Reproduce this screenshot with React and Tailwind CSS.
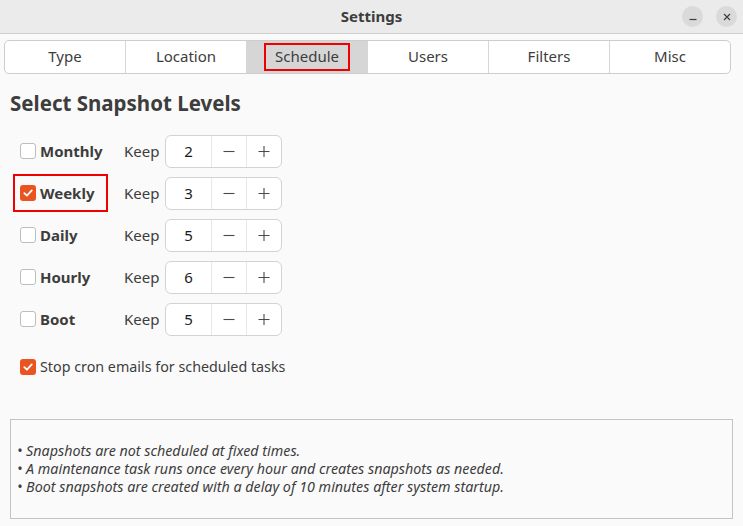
import React from "react";

const FONT = { fontFamily: '"Noto Sans", "Open Sans", sans-serif' };

function Check({ checked }) {
  if (checked) {
    return (
      <span className="flex h-[16px] w-[16px] items-center justify-center rounded-[3px] bg-[#e95420]">
        <svg width="12" height="12" viewBox="0 0 12 12">
          <path d="M2.3 6.2 L4.9 8.6 L9.8 3.4" fill="none" stroke="#fff" strokeWidth="1.8" strokeLinecap="round" strokeLinejoin="round" />
        </svg>
      </span>
    );
  }
  return <span className="block h-[16px] w-[16px] rounded-[3px] border border-[#bdbdbd] bg-white" />;
}

function Spin({ value }) {
  return (
    <div className="flex h-[33px] w-[117px] rounded-[6px] border border-[#d3d3d3] bg-white">
      <div className="flex w-[46px] items-center justify-center border-r border-[#e8e8e8] text-[15px] text-[#1a1a1a]">{value}</div>
      <div className="flex w-[35px] items-center justify-center border-r border-[#e8e8e8]">
        <svg width="14" height="14" viewBox="0 0 14 14"><path d="M1.5 7.5 H12.5" stroke="#4a4a4a" strokeWidth="1.1" /></svg>
      </div>
      <div className="flex flex-1 items-center justify-center">
        <svg width="14" height="14" viewBox="0 0 14 14"><path d="M1.5 7.5 H12.5 M7 2 V13" stroke="#4a4a4a" strokeWidth="1.1" /></svg>
      </div>
    </div>
  );
}

function Row({ label, value, checked, highlight }) {
  return (
    <div className="flex h-[42px] items-center">
      <div className="flex w-[124px] items-center pl-[20px]">
        {highlight ? (
          <div className="-ml-[7px] flex h-[38px] w-[95px] items-center border-2 border-[#f00000] pl-[5px]">
            <Check checked={checked} />
            <span className="ml-[4px] text-[15px] font-bold text-[#3d3d3d]">{label}</span>
          </div>
        ) : (
          <>
            <Check checked={checked} />
            <span className="ml-[4px] text-[15px] font-bold text-[#3d3d3d]">{label}</span>
          </>
        )}
      </div>
      <span className="w-[41px] text-[15px] text-[#3d3d3d]">Keep</span>
      <Spin value={value} />
    </div>
  );
}

export default function App() {
  const tabs = ["Type", "Location", "Schedule", "Users", "Filters", "Misc"];
  return (
    <div className="flex h-[526px] w-[743px] flex-col overflow-hidden bg-[#fafafa] text-[#3d3d3d]" style={FONT}>
      <div className="grid h-[34px] grid-cols-[1fr_auto_1fr] items-center border-b border-[#cfcfcf] bg-[#ebebeb]">
        <div />
        <div className="text-[15px] font-bold text-[#3d3d3d]">Settings</div>
        <div className="flex justify-end gap-[13px] pr-[6px]">
          <div className="flex h-[21px] w-[21px] items-center justify-center rounded-full bg-[#dadada]">
            <svg width="10" height="10" viewBox="0 0 10 10"><path d="M1.5 7.5 H8.5" stroke="#3d3d3d" strokeWidth="1.2" /></svg>
          </div>
          <div className="flex h-[21px] w-[21px] items-center justify-center rounded-full bg-[#dadada]">
            <svg width="10" height="10" viewBox="0 0 10 10"><path d="M2 2 L8 8 M8 2 L2 8" stroke="#3d3d3d" strokeWidth="1.2" /></svg>
          </div>
        </div>
      </div>

      <div className="mx-[4px] mt-[6px] flex h-[34px] w-[727px] overflow-hidden rounded-[5px] border border-[#cdcdcd] bg-white">
        {tabs.map((t, i) => (
          <div
            key={t}
            className={
              "flex flex-1 items-center justify-center pb-[1px] text-[15px] text-[#3d3d3d] " +
              (i < tabs.length - 1 ? "border-r border-[#d6d6d6] " : "") +
              (t === "Schedule" ? "bg-[#d6d6d6]" : "")
            }
          >
            {t === "Schedule" ? (
              <span className="flex h-[28px] w-[86px] items-center justify-center border-2 border-[#f00000]">{t}</span>
            ) : (
              t
            )}
          </div>
        ))}
      </div>

      <div className="ml-[10px] mt-[15px] text-[20.5px] font-bold leading-[28px] text-[#3d3d3d]">Select Snapshot Levels</div>

      <div className="mt-[13px] flex flex-col">
        <Row label="Monthly" value="2" />
        <Row label="Weekly" value="3" checked highlight />
        <Row label="Daily" value="5" />
        <Row label="Hourly" value="6" />
        <Row label="Boot" value="5" />
      </div>

      <div className="mt-[14px] flex h-[26px] items-center pl-[20px]">
        <Check checked />
        <span className="ml-[4px] text-[14.3px] text-[#3d3d3d]">Stop cron emails for scheduled tasks</span>
      </div>

      <div className="mx-[10px] mt-[39px] flex h-[100px] flex-col justify-center border border-[#c4c4c4] bg-[#fafafa] pl-[6px] text-[14.3px] italic leading-[18px] text-[#3d3d3d]">
        <div>• Snapshots are not scheduled at fixed times.</div>
        <div>• A maintenance task runs once every hour and creates snapshots as needed.</div>
        <div>• Boot snapshots are created with a delay of 10 minutes after system startup.</div>
      </div>
    </div>
  );
}
